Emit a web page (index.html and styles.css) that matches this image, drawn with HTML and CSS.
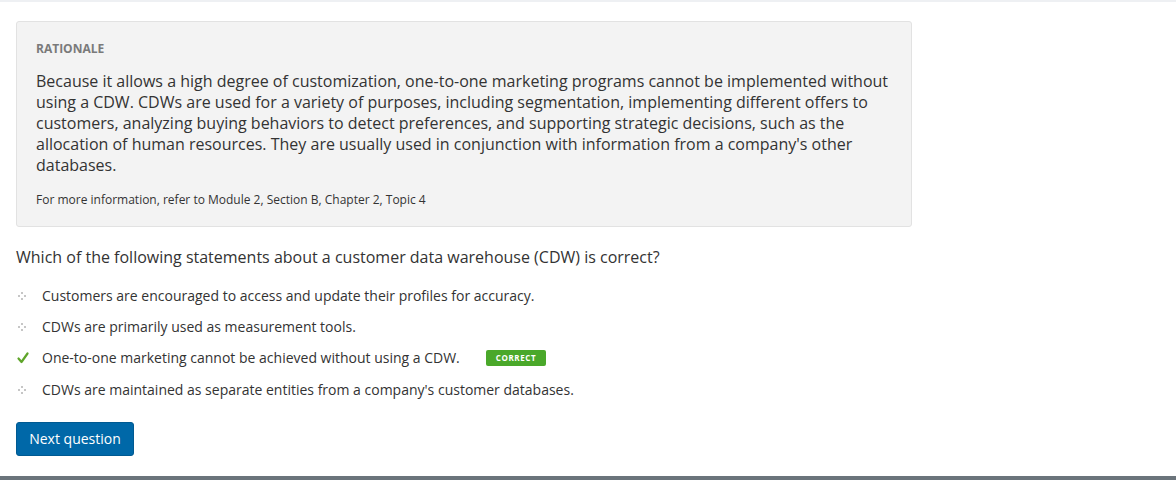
FILE: index.html
```html
<!DOCTYPE html>
<html lang="en">
<head>
<meta charset="utf-8">
<link rel="stylesheet" href="styles.css">
</head>
<body>
<div class="topstrip"></div>
<main class="content">
  <section class="rationale">
    <h2 class="rationale-title">RATIONALE</h2>
    <p class="rationale-text">Because it allows a high degree of customization, one-to-one marketing programs cannot be implemented without using a CDW. CDWs are used for a variety of purposes, including segmentation, implementing different offers to customers, analyzing buying behaviors to detect preferences, and supporting strategic decisions, such as the allocation of human resources. They are usually used in conjunction with information from a company's other databases.</p>
    <p class="rationale-ref">For more information, refer to Module 2, Section B, Chapter 2, Topic 4</p>
  </section>
  <p class="question">Which of the following statements about a customer data warehouse (CDW) is correct?</p>
  <ul class="options">
    <li class="option">
      <span class="marker"><svg width="10" height="10" viewBox="0 0 10 10"><rect x="4" y="1" width="2" height="2" fill="#c6c6c6"/><rect x="1" y="4" width="2" height="2" fill="#c6c6c6"/><rect x="7" y="4" width="2" height="2" fill="#c6c6c6"/><rect x="4" y="7" width="2" height="2" fill="#c6c6c6"/></svg></span>
      <span class="label">Customers are encouraged to access and update their profiles for accuracy.</span>
    </li>
    <li class="option">
      <span class="marker"><svg width="10" height="10" viewBox="0 0 10 10"><rect x="4" y="1" width="2" height="2" fill="#c6c6c6"/><rect x="1" y="4" width="2" height="2" fill="#c6c6c6"/><rect x="7" y="4" width="2" height="2" fill="#c6c6c6"/><rect x="4" y="7" width="2" height="2" fill="#c6c6c6"/></svg></span>
      <span class="label">CDWs are primarily used as measurement tools.</span>
    </li>
    <li class="option">
      <span class="marker"><svg width="12" height="12" viewBox="0 0 12 12"><path d="M1.5 6.5 L4.5 10 L10.5 1.5" fill="none" stroke="#5fa52a" stroke-width="2.2" stroke-linecap="round" stroke-linejoin="round"/></svg></span>
      <span class="label">One-to-one marketing cannot be achieved without using a CDW.</span>
      <span class="badge">CORRECT</span>
    </li>
    <li class="option option-last">
      <span class="marker"><svg width="10" height="10" viewBox="0 0 10 10"><rect x="4" y="1" width="2" height="2" fill="#c6c6c6"/><rect x="1" y="4" width="2" height="2" fill="#c6c6c6"/><rect x="7" y="4" width="2" height="2" fill="#c6c6c6"/><rect x="4" y="7" width="2" height="2" fill="#c6c6c6"/></svg></span>
      <span class="label">CDWs are maintained as separate entities from a company's customer databases.</span>
    </li>
  </ul>
  <button class="next-btn" type="button">Next question</button>
</main>
<div class="bottombar"></div>
</body>
</html>
```
FILE: styles.css
```css
html, body {
  margin: 0;
  padding: 0;
  background: #ffffff;
  font-family: "Open Sans", "Liberation Sans", sans-serif;
  color: #333333;
  height: 480px;
  overflow: hidden;
}
body {
  display: flex;
  flex-direction: column;
}
.topstrip {
  height: 2px;
  background: #eef0f3;
}
.content {
  flex: 1;
  padding: 19px 16px 0 16px;
}
.rationale {
  width: 896px;
  box-sizing: border-box;
  background: #f3f3f3;
  border: 1px solid #e2e2e2;
  border-radius: 3px;
  padding: 19px 19px 18px 19px;
}
.rationale-title {
  margin: 0;
  font-size: 12px;
  line-height: 16px;
  font-weight: 700;
  color: #7a7a7a;
}
.rationale-text {
  margin: 14px 0 0 0;
  font-size: 16px;
  line-height: 21px;
  color: #333333;
}
.rationale-ref {
  margin: 16px 0 0 0;
  font-size: 12px;
  line-height: 16px;
  color: #333333;
}
.question {
  margin: 19px 0 0 0;
  font-size: 16px;
  line-height: 22px;
  color: #333333;
}
.options {
  list-style: none;
  margin: 18px 0 0 0;
  padding: 0;
  display: flex;
  flex-direction: column;
  gap: 11px;
}
.option {
  display: flex;
  align-items: center;
  height: 20px;
  font-size: 14px;
  line-height: 20px;
}
.option-last {
  margin-top: 1px;
}
.marker {
  width: 26px;
  display: flex;
  align-items: center;
  padding-left: 1px;
  box-sizing: border-box;
}
.label {
  color: #333333;
}
.badge {
  margin-left: 26px;
  background: #4aa82a;
  color: #ffffff;
  font-size: 8px;
  font-weight: 700;
  letter-spacing: 0.6px;
  line-height: 16px;
  height: 16px;
  padding: 0 10px;
  border-radius: 2px;
}
.next-btn {
  margin-top: 22px;
  background: #0068a8;
  color: #ffffff;
  border: 1px solid #005a92;
  border-radius: 3px;
  font-family: "Open Sans", "Liberation Sans", sans-serif;
  font-size: 14px;
  line-height: 20px;
  padding: 6px 12px;
  height: 34px;
  box-sizing: border-box;
  width: 118px;
}
.bottombar {
  height: 4px;
  background: #6b747b;
}
```
